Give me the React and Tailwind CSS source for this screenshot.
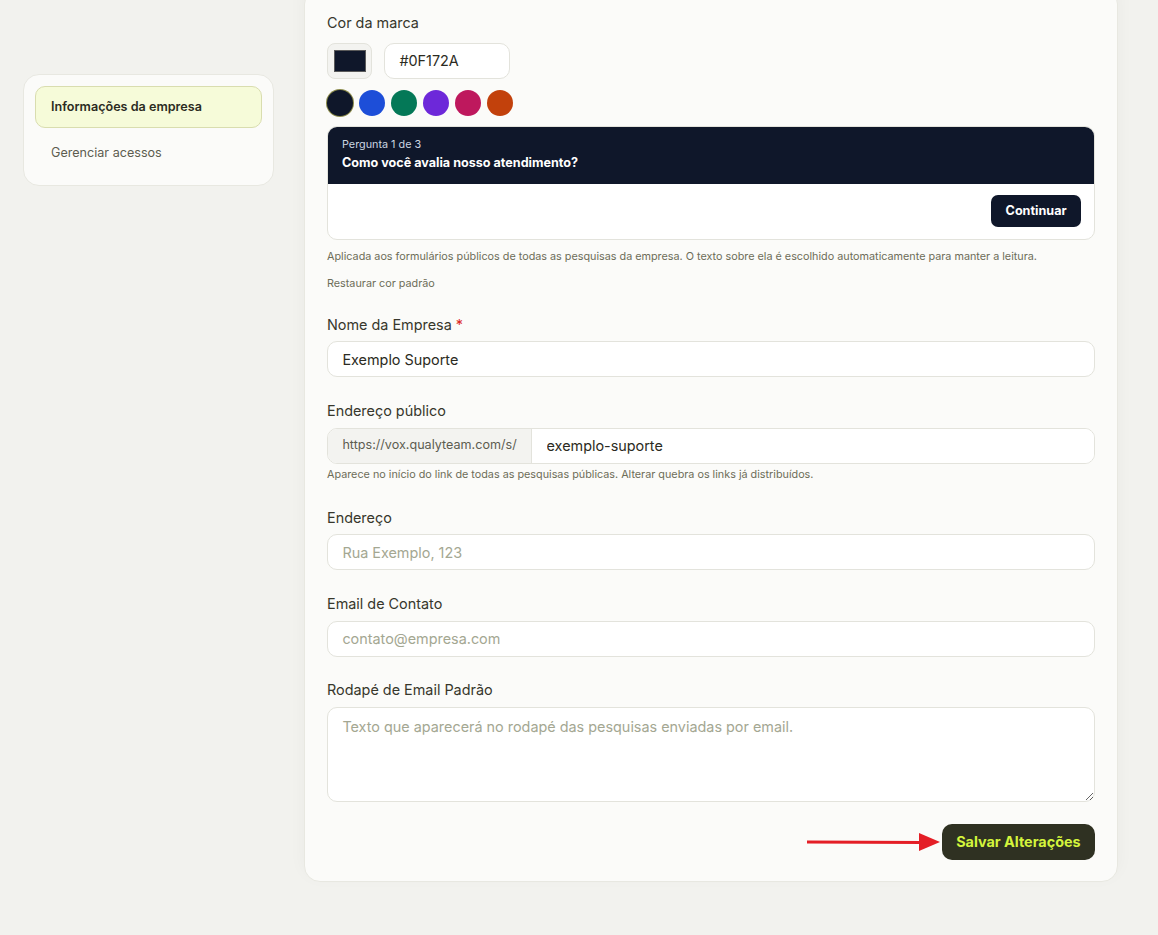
import React from 'react';

const swatches = ['#0F172A', '#1D4ED8', '#047857', '#6D28D9', '#BE185D', '#C2410C'];

function Label({ children, required }) {
  return (
    <label className="block text-[14.4px] leading-[21.6px] text-[#37372c] mb-[6px]">
      {children}
      {required && <span className="text-[#dc2626] ml-1">*</span>}
    </label>
  );
}

function TextInput({ value, placeholder }) {
  return (
    <input
      defaultValue={value}
      placeholder={placeholder}
      className="w-full h-[36px] px-[14.4px] rounded-[10px] border border-[#e3e3dc] bg-white text-[14.4px] text-[#2b2b22] placeholder:text-[#a4a792] outline-none"
    />
  );
}

export default function App() {
  return (
    <div
      className="min-h-screen bg-[#f2f2ee] overflow-hidden"
      style={{ fontFamily: 'Inter, "Noto Sans", sans-serif' }}
    >
      <div className="flex gap-[30px] pl-[23px] pr-[40px] pb-[53px]">
        {/* sidebar */}
        <aside className="w-[251px] shrink-0 mt-[74px] self-start bg-[#fbfbf9] border border-[#e8e8e1] rounded-[16px] p-[11px]">
          <div className="h-[42px] flex items-center px-[15px] rounded-[10px] bg-[#f6fbd9] border border-[#d9ddaf] text-[12.6px] font-semibold text-[#2b2b22]">
            Informações da empresa
          </div>
          <div className="h-[42px] mt-[4px] flex items-center px-[16px] text-[12.6px] text-[#5d5d50]">
            Gerenciar acessos
          </div>
        </aside>

        {/* main card */}
        <main className="flex-1 -mt-[12px] bg-[#fbfbf9] border border-[#e8e8e1] rounded-[16px] px-[22px] pt-[23px] pb-[21px] shadow-[0_-6px_18px_rgba(0,0,0,0.04)]">
          <Label>Cor da marca</Label>
          <div className="flex items-center gap-[12px] mt-[9px]">
            <div className="w-[45px] h-[36px] rounded-[8px] border border-[#e3e3dc] bg-[#f3f3f0] flex items-center justify-center">
              <div className="w-[32px] h-[22px] bg-[#0f172a] border border-[#5a5a5a]" />
            </div>
            <input
              defaultValue="#0F172A"
              className="w-[126px] h-[36px] px-[14.4px] rounded-[10px] border border-[#e3e3dc] bg-white text-[14.4px] text-[#2b2b22] outline-none"
            />
          </div>
          <div className="flex gap-[6px] mt-[11px]">
            {swatches.map((c, i) => (
              <span
                key={c}
                className={
                  'w-[26px] h-[26px] rounded-full ' +
                  (i === 0 ? 'ring-1 ring-[#8a8a4a]' : '')
                }
                style={{ backgroundColor: c }}
              />
            ))}
          </div>

          {/* preview */}
          <div className="mt-[10px] rounded-[10px] border border-[#e3e3dc] bg-white overflow-hidden">
            <div className="bg-[#0f172a] h-[57px] px-[14px] pt-[11px]">
              <div className="text-[10.8px] leading-[14px] text-[#cbd5e1]">Pergunta 1 de 3</div>
              <div className="text-[12.6px] leading-[18px] font-bold text-white mt-[2px]">
                Como você avalia nosso atendimento?
              </div>
            </div>
            <div className="h-[55px] flex items-center justify-end px-[13px]">
              <button className="h-[32px] px-[14.4px] rounded-[7px] bg-[#0f172a] text-white text-[12.6px] font-bold">
                Continuar
              </button>
            </div>
          </div>
          <p className="mt-[9px] text-[10.8px] leading-[16px] text-[#6d6d58]">
            Aplicada aos formulários públicos de todas as pesquisas da empresa. O texto sobre ela é escolhido automaticamente para manter a leitura.
          </p>
          <button className="mt-[11px] block text-[10.8px] leading-[16px] text-[#6d6d58]">
            Restaurar cor padrão
          </button>

          <div className="mt-[22px]">
            <Label required>Nome da Empresa</Label>
            <TextInput value="Exemplo Suporte" />
          </div>

          <div className="mt-[23px]">
            <Label>Endereço público</Label>
            <div className="flex h-[36px] rounded-[10px] border border-[#e3e3dc] bg-white overflow-hidden">
              <span className="flex items-center px-[14.4px] bg-[#f3f3f0] border-r border-[#e3e3dc] text-[12.6px] text-[#5d5d50] whitespace-nowrap">
                https://vox.qualyteam.com/s/
              </span>
              <input
                defaultValue="exemplo-suporte"
                className="flex-1 px-[14.4px] text-[14.4px] text-[#2b2b22] outline-none bg-white"
              />
            </div>
            <p className="mt-[3px] text-[10.8px] leading-[16px] text-[#6d6d58]">
              Aparece no início do link de todas as pesquisas públicas. Alterar quebra os links já distribuídos.
            </p>
          </div>

          <div className="mt-[24px]">
            <Label>Endereço</Label>
            <TextInput placeholder="Rua Exemplo, 123" />
          </div>

          <div className="mt-[23px]">
            <Label>Email de Contato</Label>
            <TextInput placeholder="contato@empresa.com" />
          </div>

          <div className="mt-[22px]">
            <Label>Rodapé de Email Padrão</Label>
            <textarea
              rows={4}
              placeholder="Texto que aparecerá no rodapé das pesquisas enviadas por email."
              className="block w-full h-[95px] px-[14.4px] py-[8px] rounded-[10px] border border-[#e3e3dc] bg-white text-[14.4px] text-[#2b2b22] placeholder:text-[#a4a792] outline-none"
            />
          </div>

          <div className="mt-[22px] flex items-center justify-end">
            <svg width="136" height="22" viewBox="0 0 136 22" className="mr-[1px]">
              <line x1="2" y1="11" x2="118" y2="11.5" stroke="#e41e26" strokeWidth="3" />
              <polygon points="114,2 135,11 114,20" fill="#e41e26" />
            </svg>
            <button className="h-[36px] px-[14.4px] rounded-[10px] bg-[#2f3122] text-[#d4f53c] text-[14.4px] font-bold">
              Salvar Alterações
            </button>
          </div>
        </main>
      </div>
    </div>
  );
}
